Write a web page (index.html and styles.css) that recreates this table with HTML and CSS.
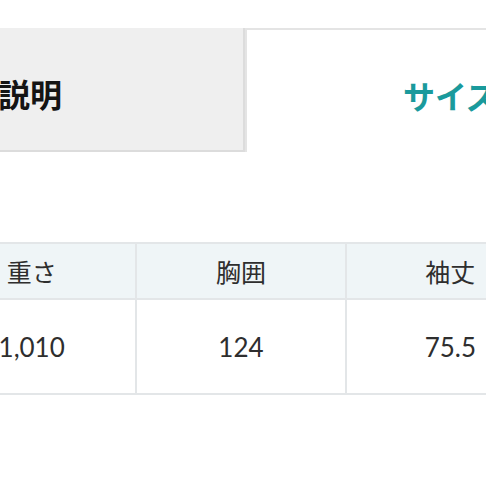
FILE: index.html
```html
<!DOCTYPE html>
<html lang="ja">
<head>
<meta charset="utf-8">
<link rel="stylesheet" href="styles.css">
</head>
<body>
<div class="page">
  <div class="tabs">
    <div class="tab tab-off"><span>商品説明</span></div>
    <div class="tab tab-on"><span>サイズ表</span></div>
  </div>
  <table class="size">
    <thead>
      <tr><th>重さ</th><th>胸囲</th><th>袖丈</th></tr>
    </thead>
    <tbody>
      <tr><td>1,010</td><td>124</td><td>75.5</td></tr>
    </tbody>
  </table>
</div>
</body>
</html>
```
FILE: styles.css
```css
html, body {
  margin: 0;
  padding: 0;
  background: #fff;
}
body {
  width: 486px;
  height: 486px;
  overflow: hidden;
  font-family: Lato, "Noto Sans CJK JP", sans-serif;
}
.page {
  padding-top: 28px;
}
.tabs {
  display: flex;
  height: 124px;
  margin-left: -76px;
  width: 700px;
}
.tab {
  box-sizing: border-box;
  display: flex;
  align-items: center;
  font-family: "Noto Sans CJK JP", sans-serif;
  font-weight: 700;
  font-size: 32px;
  white-space: nowrap;
  padding-top: 8px;
}
.tab-off {
  width: 321px;
  background: #efefef;
  border-right: 2px solid #dcdcdc;
  border-bottom: 2px solid #dcdcdc;
  justify-content: flex-end;
  padding-right: 181px;
  color: #141414;
}
.tab-on {
  flex: 1;
  background: #fff;
  border-top: 2px solid #e4e4e4;
  border-left: 2px solid #e4e4e4;
  padding-left: 156px;
  color: #1a9a9c;
  overflow: hidden;
}
.size {
  margin-top: 90px;
  margin-left: -74px;
  border-collapse: collapse;
  table-layout: fixed;
  width: 630px;
}
.size th, .size td {
  border: 2px solid #e3e6e8;
  text-align: center;
  color: #2e2e2e;
  font-weight: 400;
  width: 206px;
}
.size th {
  background: #eff5f7;
  height: 54px;
  padding: 0;
  font-family: "Noto Sans CJK JP", sans-serif;
  font-size: 25px;
}
.size td {
  height: 93px;
  padding: 0;
  font-size: 26px;
}
```
